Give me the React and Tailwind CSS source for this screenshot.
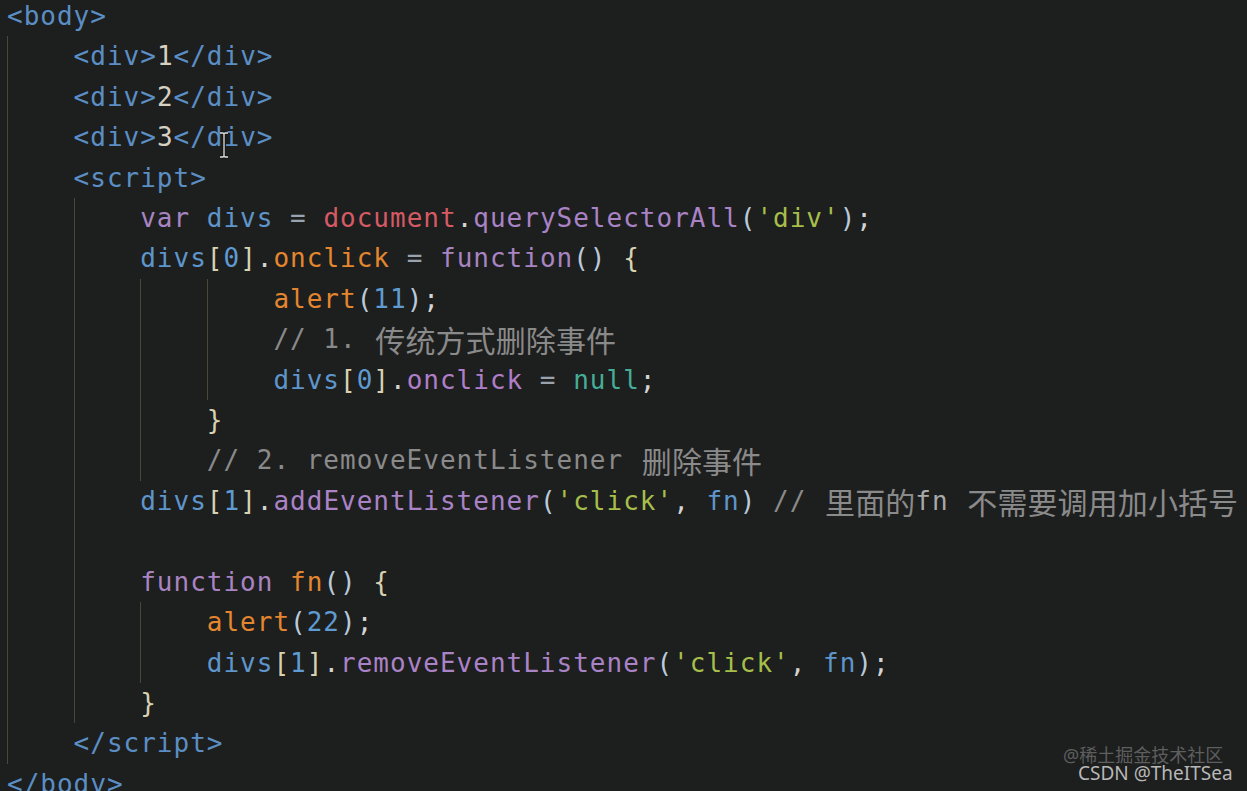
import React from "react";

const C = {
  tag: "text-[#5b8ec4]",
  txt: "text-[#d6d1c2]",
  kw: "text-[#a884c2]",
  vb: "text-[#5e95ca]",
  op: "text-[#9aa3ad]",
  doc: "text-[#d65a64]",
  fnc: "text-[#a983c6]",
  str: "text-[#a6be4a]",
  par: "text-[#b9cadb]",
  brk: "text-[#d8d2b2]",
  org: "text-[#e3862f]",
  num: "text-[#5f9bd2]",
  nul: "text-[#45ad96]",
  prp: "text-[#b07ec8]",
  cm: "text-[#8a8a8a]",
  cmb: "text-[#a8a8a8]",
  pun: "text-[#d4d4d4]",
};

const t = (c, s) => ({ c, s });
const k = (c, s) => ({ c, s, cjk: true });

const lines = [
  { i: 0, g: [], tk: [t(C.tag, "<body>")] },
  { i: 1, g: [0], tk: [t(C.tag, "<div>"), t(C.txt, "1"), t(C.tag, "</div>")] },
  { i: 1, g: [0], tk: [t(C.tag, "<div>"), t(C.txt, "2"), t(C.tag, "</div>")] },
  { i: 1, g: [0], tk: [t(C.tag, "<div>"), t(C.txt, "3"), t(C.tag, "</div>")] },
  { i: 1, g: [0], tk: [t(C.tag, "<script>")] },
  {
    i: 2,
    g: [0, 1],
    tk: [
      t(C.kw, "var "),
      t(C.vb, "divs"),
      t(C.op, " = "),
      t(C.doc, "document"),
      t(C.pun, "."),
      t(C.fnc, "querySelectorAll"),
      t(C.par, "("),
      t(C.str, "'div'"),
      t(C.par, ")"),
      t(C.pun, ";"),
    ],
  },
  {
    i: 2,
    g: [0, 1],
    tk: [
      t(C.vb, "divs"),
      t(C.brk, "["),
      t(C.num, "0"),
      t(C.brk, "]"),
      t(C.pun, "."),
      t(C.org, "onclick"),
      t(C.op, " = "),
      t(C.kw, "function"),
      t(C.par, "()"),
      t(C.pun, " "),
      t(C.brk, "{"),
    ],
  },
  {
    i: 4,
    g: [0, 1, 2, 3],
    tk: [t(C.org, "alert"), t(C.par, "("), t(C.num, "11"), t(C.par, ")"), t(C.pun, ";")],
  },
  { i: 4, g: [0, 1, 2, 3], tk: [t(C.cm, "// 1. "), k(C.cm, "传统方式删除事件")] },
  {
    i: 4,
    g: [0, 1, 2, 3],
    tk: [
      t(C.vb, "divs"),
      t(C.brk, "["),
      t(C.num, "0"),
      t(C.brk, "]"),
      t(C.pun, "."),
      t(C.prp, "onclick"),
      t(C.op, " = "),
      t(C.nul, "null"),
      t(C.pun, ";"),
    ],
  },
  { i: 3, g: [0, 1, 2], tk: [t(C.brk, "}")] },
  { i: 3, g: [0, 1, 2], tk: [t(C.cm, "// 2. removeEventListener "), k(C.cm, "删除事件")] },
  {
    i: 2,
    g: [0, 1],
    tk: [
      t(C.vb, "divs"),
      t(C.brk, "["),
      t(C.num, "1"),
      t(C.brk, "]"),
      t(C.pun, "."),
      t(C.fnc, "addEventListener"),
      t(C.par, "("),
      t(C.str, "'click'"),
      t(C.pun, ", "),
      t(C.vb, "fn"),
      t(C.par, ")"),
      t(C.cm, " // "),
      k(C.cm, "里面的"),
      t(C.cmb, "fn "),
      k(C.cm, "不需要调用加小括号"),
    ],
  },
  { i: 2, g: [0, 1], tk: [] },
  {
    i: 2,
    g: [0, 1],
    tk: [t(C.kw, "function "), t(C.org, "fn"), t(C.par, "()"), t(C.pun, " "), t(C.brk, "{")],
  },
  {
    i: 3,
    g: [0, 1, 2],
    tk: [t(C.org, "alert"), t(C.par, "("), t(C.num, "22"), t(C.par, ")"), t(C.pun, ";")],
  },
  {
    i: 3,
    g: [0, 1, 2],
    tk: [
      t(C.vb, "divs"),
      t(C.brk, "["),
      t(C.num, "1"),
      t(C.brk, "]"),
      t(C.pun, "."),
      t(C.fnc, "removeEventListener"),
      t(C.par, "("),
      t(C.str, "'click'"),
      t(C.pun, ", "),
      t(C.vb, "fn"),
      t(C.par, ")"),
      t(C.pun, ";"),
    ],
  },
  { i: 2, g: [0, 1], tk: [t(C.brk, "}")] },
  { i: 1, g: [0], tk: [t(C.tag, "</script>")] },
  { i: 0, g: [], tk: [t(C.tag, "</body>")] },
];

function Line({ line }) {
  const cells = [];
  for (let n = 0; n < line.i; n++) {
    cells.push(
      <span
        key={n}
        className={
          line.g.includes(n)
            ? "inline-block h-full w-[66.6px] shrink-0 border-l border-[#4a4838]"
            : "inline-block h-full w-[66.6px] shrink-0 border-l border-transparent"
        }
      />
    );
  }
  return (
    <div className="flex h-[40.42px] items-center whitespace-pre leading-[40.42px]">
      {cells}
      {line.tk.map((tok, j) =>
        tok.cjk ? (
          <span
            key={j}
            className={`${tok.c} ml-[2px] font-['Noto_Sans_CJK_SC',sans-serif] text-[30px] tracking-[0.1px]`}
          >
            {tok.s}
          </span>
        ) : (
          <span key={j} className={tok.c}>
            {tok.s}
          </span>
        )
      )}
    </div>
  );
}

export default function App() {
  return (
    <div className="relative h-[791px] w-[1247px] overflow-hidden bg-[#1d1e1e]">
      <div className="mt-[-4px] pl-[7px] font-['DejaVu_Sans_Mono',monospace] text-[26px] tracking-[1px]">
        {lines.map((l, idx) => (
          <Line key={idx} line={l} />
        ))}
      </div>

      {/* mouse I-beam cursor */}
      <svg
        className="absolute left-[217px] top-[131px]"
        width="14"
        height="28"
        viewBox="0 0 14 28"
      >
        <path
          d="M3 2 H6 Q7 2 7 4 V24 Q7 26 6 26 H3 M11 2 H8 Q7 2 7 4 M7 24 Q7 26 8 26 H11"
          stroke="#111"
          strokeWidth="3"
          fill="none"
        />
        <path
          d="M3 2 H6 Q7 2 7 4 V24 Q7 26 6 26 H3 M11 2 H8 Q7 2 7 4 M7 24 Q7 26 8 26 H11"
          stroke="#e6e6e6"
          strokeWidth="1.3"
          fill="none"
        />
      </svg>

      {/* watermarks */}
      <div className="absolute left-[1063px] top-[746px] font-['Noto_Sans','Noto_Sans_CJK_SC',sans-serif] text-[18px] leading-[18px] text-[#5e5e5e]">
        @稀土掘金技术社区
      </div>
      <div className="absolute left-[1078px] top-[764px] font-['Noto_Sans','Noto_Sans_CJK_SC',sans-serif] text-[19px] leading-[19px] text-[#b8b8b8]">
        CSDN @TheITSea
      </div>
    </div>
  );
}
